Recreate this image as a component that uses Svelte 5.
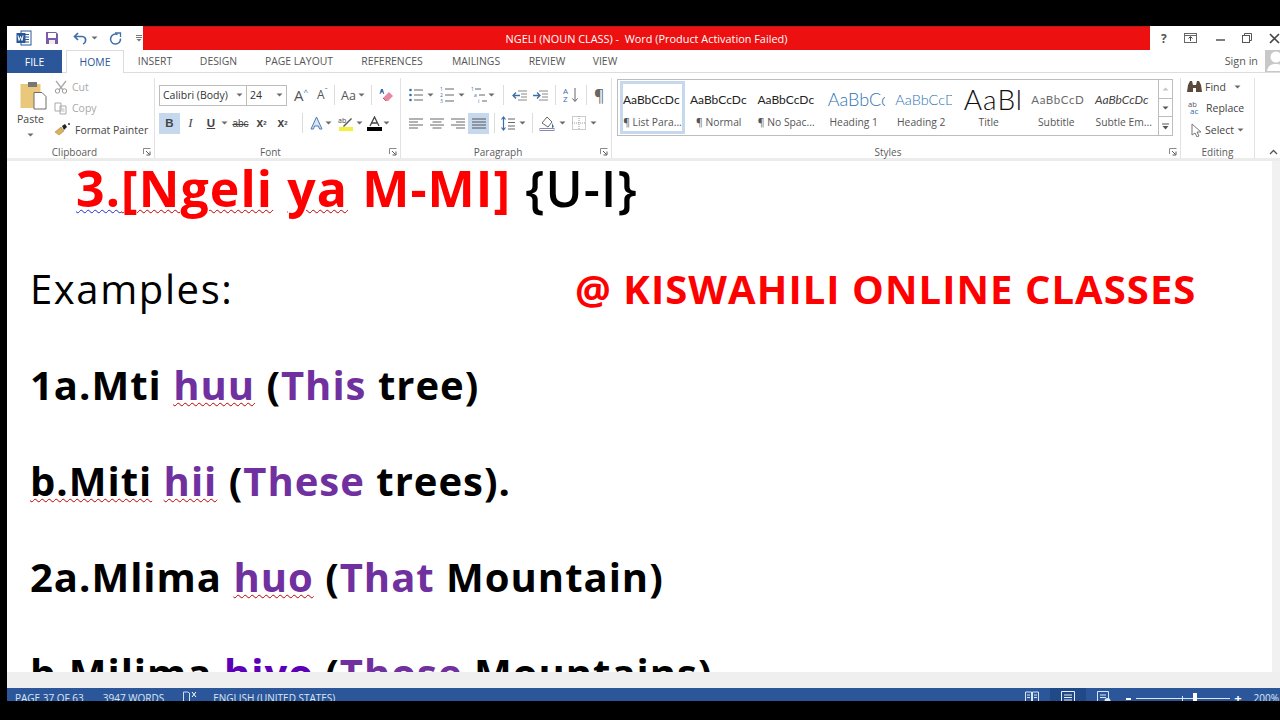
<script>
  const tabs = [
    ['INSERT', 't-insert'], ['DESIGN', 't-design'], ['PAGE LAYOUT', 't-page'],
    ['REFERENCES', 't-ref'], ['MAILINGS', 't-mail'], ['REVIEW', 't-review'], ['VIEW', 't-view']
  ];
  const styles = [
    { s: 'AaBbCcDc', l: '¶ List Para...', c: 'sel' },
    { s: 'AaBbCcDc', l: '¶ Normal', c: '' },
    { s: 'AaBbCcDc', l: '¶ No Spac...', c: '' },
    { s: 'AaBbCc', l: 'Heading 1', c: 'h1' },
    { s: 'AaBbCcD', l: 'Heading 2', c: 'h2' },
    { s: 'AaBl', l: 'Title', c: 'title' },
    { s: 'AaBbCcD', l: 'Subtitle', c: 'sub' },
    { s: 'AaBbCcDc', l: 'Subtle Em...', c: 'em' }
  ];
</script>

{#snippet caret()}
  <svg class="caret" width="7" height="4" viewBox="0 0 7 4"><path d="M0.500 0.500h6L3.500 3.500z" fill="#6a6a6a"/></svg>
{/snippet}

{#snippet launcher()}
  <svg class="launch" width="8" height="8" viewBox="0 0 8 8"><path d="M0.500 6V0.500H7.500" fill="none" stroke="#8a8a8a"/><path d="M3 3l3.500 3.500M7 3.500V7H3.500" fill="none" stroke="#5a5a5a"/></svg>
{/snippet}

<div class="window">
  <div class="titlebar">
    <div class="qat">
      <svg width="16" height="16" viewBox="0 0 16 16"><rect x="5" y="1" width="10" height="14" fill="#fff" stroke="#2b579a"/><path d="M9 4.500h4M9 7h4M9 9.500h4M9 12h4" stroke="#2b579a"/><rect x="0.500" y="3" width="9" height="10" fill="#2b579a"/><path d="M2 5.500l1 5 1.500-4 1.500 4 1-5" fill="none" stroke="#fff"/></svg>
      <svg class="q-save" width="14" height="14" viewBox="0 0 14 14"><path d="M1 1h10l2 2v10H1z" fill="#7d5aa6"/><rect x="3" y="2" width="8" height="5" fill="#fff"/><rect x="4" y="9" width="6" height="4" fill="#eee"/></svg>
      <svg class="q-undo" width="15" height="13" viewBox="0 0 15 13"><path d="M5 1L1.500 4.500 5 8M2 4.500h7a3.500 3.500 0 0 1 3.500 4.500 3.500 3.500 0 0 1-2.500 3" fill="none" stroke="#3f6fa8" stroke-width="1.700"/></svg>
      {@render caret()}
      <svg class="q-redo" width="13" height="13" viewBox="0 0 13 13"><path d="M8.500 2.500A5 5 0 1 0 11.500 6.500" fill="none" stroke="#3f6fa8" stroke-width="1.500"/><path d="M6 1h5.500v4" fill="none" stroke="#3f6fa8" stroke-width="1.300"/></svg>
      <svg class="q-more" width="6" height="8" viewBox="0 0 6 8"><path d="M0 1.500h6M0 3.500h6" stroke="#777"/><path d="M0.500 5h5L3 7.500z" fill="#777"/></svg>
    </div>
    <div class="redbar">NGELI (NOUN CLASS) -&nbsp; Word (Product Activation Failed)</div>
    <div class="winctl">
      <span class="help">?</span>
      <svg width="13" height="10" viewBox="0 0 13 10"><rect x="0.500" y="0.500" width="12" height="9" fill="none" stroke="#666"/><path d="M0.500 2.500h12" stroke="#666"/><path d="M6.500 8V4M4.500 5.500l2-2 2 2" fill="none" stroke="#444"/></svg>
      <svg width="9" height="9" viewBox="0 0 9 9"><path d="M0 6h9" stroke="#555" stroke-width="1.500"/></svg>
      <svg width="10" height="10" viewBox="0 0 10 10"><rect x="0.500" y="2.500" width="7" height="7" fill="#fff" stroke="#555"/><path d="M2.500 2.500v-2h7v7h-2" fill="none" stroke="#555"/></svg>
      <svg width="11" height="11" viewBox="0 0 11 11"><path d="M1 1l9 9M10 1l-9 9" stroke="#444" stroke-width="1.600"/></svg>
    </div>
  </div>

  <div class="tabs">
    <div class="tab-file">FILE</div>
    <div class="tab-home">HOME</div>
    {#each tabs as t}
      <div class="tab {t[1]}">{t[0]}</div>
    {/each}
    <div class="signin">Sign in</div>
    <div class="avatar"><svg width="15" height="21" viewBox="0 0 15 21"><circle cx="11" cy="7" r="5.500" fill="#fff"/><path d="M2 21c1-6 5-7 9-7s4 1 4 1v6z" fill="#fff"/></svg></div>
  </div>

  <div class="ribbon">
    <section class="group g-clip">
      <div class="g-body clip-body">
        <div class="paste">
          <svg width="27" height="29" viewBox="0 0 27 29"><rect x="0.500" y="3" width="20" height="24" fill="#e9c77b"/><rect x="8" y="1" width="9" height="5" fill="#777"/><path d="M14 11.500h8l4 4V28H14z" fill="#fff" stroke="#6d6d6d"/></svg>
          <span class="paste-l">Paste</span>
          {@render caret()}
        </div>
        <div class="clip-list">
          <div class="cl dim"><svg width="14" height="14" viewBox="0 0 14 14"><circle cx="3.500" cy="11" r="2.200" fill="none" stroke="#999"/><circle cx="10.500" cy="11" r="2.200" fill="none" stroke="#999"/><path d="M2 1l7 9M12 1L5 10" stroke="#aaa" stroke-width="1.300"/></svg><span>Cut</span></div>
          <div class="cl dim"><svg width="14" height="14" viewBox="0 0 14 14"><path d="M1 2h6v8H1zM6 5h6v8H6z" fill="#fff" stroke="#aaa"/><path d="M7.500 8h3M7.500 10h3" stroke="#bbb"/></svg><span>Copy</span></div>
          <div class="cl"><svg width="17" height="13" viewBox="0 0 17 13"><path d="M1 9l6-5 3 4-5 4z" fill="#d8b15a" stroke="#9a7a34" stroke-width="0.500"/><path d="M8 3l3-2 2 3-3 3z" fill="#222"/><path d="M14 1h2M15 0v2" stroke="#333"/></svg><span>Format Painter</span></div>
        </div>
      </div>
      <footer class="g-foot">Clipboard{@render launcher()}</footer>
    </section>

    <section class="group g-font">
      <div class="g-body tools">
        <div class="row r1">
          <div class="combo c-font"><span>Calibri (Body)</span>{@render caret()}</div>
          <div class="combo c-size"><span>24</span>{@render caret()}</div>
          <span class="grow ml6">A<sup>^</sup></span>
          <span class="shrink">A<sup>ˇ</sup></span>
          <i class="sep s1"></i>
          <span class="case">Aa</span>{@render caret()}
          <i class="sep"></i>
          <svg class="ml4" width="15" height="16" viewBox="0 0 15 16"><path d="M2 2L0.500 7h1l.4-1.500h2L4.300 7h1L3.800 2z" fill="#3d6da6"/><path d="M4 11l6-6 4 4-5 5H7z" fill="#e58aa2"/><path d="M4 11l3 3" stroke="#c56"/></svg>
        </div>
        <div class="row r2">
          <span class="fmt on b">B</span>
          <span class="fmt i">I</span>
          <span class="fmt u">U</span>{@render caret()}
          <span class="fmt abc">abc</span>
          <span class="fmt x">x<sub>2</sub></span>
          <span class="fmt x">x<sup>2</sup></span>
          <i class="sep s2"></i>
          <svg class="fa" width="15" height="15" viewBox="0 0 15 15"><path d="M7.500 1L2 13h2.500l1-3h4l1 3H13z" fill="#d9e5f3" stroke="#4b7ab5"/></svg>
          <span class="gap1"></span>{@render caret()}
          <svg class="ml3" width="17" height="15" viewBox="0 0 17 15"><rect x="1" y="11" width="14" height="4" fill="#f5f03c"/><path d="M5 10l8-8 1 1-8 8z" fill="#555"/><text x="0" y="7" font-size="7" font-family="Open Sans" fill="#444">ab</text></svg>
          <span class="gap1"></span>{@render caret()}
          <svg class="ml3b" width="15" height="15" viewBox="0 0 15 15"><rect x="0" y="11" width="15" height="4" fill="#000"/><path d="M3 10L7.500 1 12 10M5 7h5" fill="none" stroke="#444" stroke-width="1.300"/></svg>
          <span class="gap1"></span>{@render caret()}
        </div>
      </div>
      <footer class="g-foot">Font{@render launcher()}</footer>
    </section>

    <section class="group g-para">
      <div class="g-body tools">
        <div class="row r1 p1">
          <svg width="14" height="14" viewBox="0 0 14 14"><path d="M5 2h9M5 7h9M5 12h9" stroke="#666"/><circle cx="1.500" cy="2" r="1.300" fill="#3d6da6"/><circle cx="1.500" cy="7" r="1.300" fill="#3d6da6"/><circle cx="1.500" cy="12" r="1.300" fill="#3d6da6"/></svg>
          <span class="gap3"></span>{@render caret()}
          <svg class="ml5" width="14" height="16" viewBox="0 0 14 16"><path d="M5 2h9M5 8h9M5 14h9" stroke="#666"/><text x="0" y="4" font-size="5" fill="#3d6da6" font-family="Open Sans">1</text><text x="0" y="10" font-size="5" fill="#3d6da6" font-family="Open Sans">2</text><text x="0" y="16" font-size="5" fill="#3d6da6" font-family="Open Sans">3</text></svg>
          <span class="gap3"></span>{@render caret()}
          <svg class="ml5" width="16" height="16" viewBox="0 0 16 16"><path d="M4 2h6M8 8h6M11 14h5" stroke="#666"/><text x="0" y="4" font-size="5" fill="#3d6da6" font-family="Open Sans">1</text><text x="3" y="10" font-size="5" fill="#3d6da6" font-family="Open Sans">a</text><text x="7" y="16" font-size="5" fill="#3d6da6" font-family="Open Sans">i</text></svg>
          <span class="gap1"></span>{@render caret()}
          <i class="sep s3"></i>
          <svg width="15" height="11" viewBox="0 0 15 11"><path d="M6 1h9M9 4h6M9 7h6M6 10h9" stroke="#888"/><path d="M8 5.500H1M4 2.500l-3 3 3 3" fill="none" stroke="#3d6da6" stroke-width="1.300"/></svg>
          <svg class="ml5" width="15" height="11" viewBox="0 0 15 11"><path d="M6 1h9M9 4h6M9 7h6M6 10h9" stroke="#888"/><path d="M0 5.500h7M4 2.500l3 3-3 3" fill="none" stroke="#3d6da6" stroke-width="1.300"/></svg>
          <i class="sep s4"></i>
          <svg width="16" height="16" viewBox="0 0 16 16"><text x="0" y="7" font-size="8" font-family="Open Sans" fill="#3d6da6">A</text><text x="0" y="15" font-size="8" font-family="Open Sans" fill="#3d6da6">Z</text><path d="M12 1v13M9.500 11.500l2.500 3 2.500-3" fill="none" stroke="#666"/></svg>
          <i class="sep s4"></i>
          <span class="pil">¶</span>
        </div>
        <div class="row r2 p2">
          <svg width="14" height="11" viewBox="0 0 14 11"><path d="M0 1h14M0 4h9M0 7h14M0 10h9" stroke="#666"/></svg>
          <svg class="ml7" width="14" height="11" viewBox="0 0 14 11"><path d="M0 1h14M2.500 4h9M0 7h14M2.500 10h9" stroke="#666"/></svg>
          <svg class="ml7" width="14" height="11" viewBox="0 0 14 11"><path d="M0 1h14M5 4h9M0 7h14M5 10h9" stroke="#666"/></svg>
          <span class="just on"><svg width="14" height="11" viewBox="0 0 14 11"><path d="M0 1h14M0 4h14M0 7h14M0 10h14" stroke="#555"/></svg></span>
          <i class="sep s5"></i>
          <svg width="14" height="15" viewBox="0 0 14 15"><path d="M2.500 1v13M0.500 3.500l2-2.500 2 2.500M0.500 11.500l2 2.500 2-2.500" fill="none" stroke="#3d6da6" stroke-width="1.200"/><path d="M7 3h7M7 6.500h7M7 10h7M7 13h7" stroke="#666"/></svg>
          <span class="gap3"></span>{@render caret()}
          <i class="sep s6"></i>
          <svg width="17" height="16" viewBox="0 0 17 16"><path d="M3 8l5-6 5 5-4 5z" fill="#fff" stroke="#666"/><path d="M13 8l2 4-2 1z" fill="#3d6da6"/><rect x="1" y="13.500" width="14" height="2" fill="none" stroke="#88a"/></svg>
          <span class="gap2"></span>{@render caret()}
          <svg class="ml5" width="14" height="14" viewBox="0 0 14 14"><path d="M0.500 0.500h13v13h-13zM7 0v14M0 7h14" fill="none" stroke="#999" stroke-dasharray="1 1"/></svg>
          <span class="gap3"></span>{@render caret()}
        </div>
      </div>
      <footer class="g-foot">Paragraph{@render launcher()}</footer>
    </section>

    <section class="group g-styles">
      <div class="g-body">
        <div class="gallery">
          {#each styles as st}
            <div class="style {st.c}">
              <div class="sample">{st.s}</div>
              <div class="slabel">{st.l}</div>
            </div>
          {/each}
          <div class="scroller">
            <div class="sb"><svg width="7" height="4" viewBox="0 0 7 4"><path d="M0.500 3.500h6L3.500 0.500z" fill="#c4c4c4"/></svg></div>
            <div class="sb"><svg width="7" height="4" viewBox="0 0 7 4"><path d="M0.500 0.500h6L3.500 3.500z" fill="#555"/></svg></div>
            <div class="sb"><svg width="7" height="7" viewBox="0 0 7 7"><path d="M0 1h7" stroke="#555"/><path d="M0.500 3h6L3.500 6.500z" fill="#555"/></svg></div>
          </div>
        </div>
      </div>
      <footer class="g-foot">Styles{@render launcher()}</footer>
    </section>

    <section class="group g-edit">
      <div class="g-body edit-body">
        <div class="ed"><svg width="15" height="13" viewBox="0 0 15 13"><path d="M1 5l2-4h2l1 4h3l1-4h2l2 4 1 7H9V8H6v4H0z" fill="#5a4a3a"/></svg><span>Find</span><span class="gap4"></span>{@render caret()}</div>
        <div class="ed"><svg width="16" height="14" viewBox="0 0 16 14"><text x="1" y="6" font-size="7.500" font-family="Open Sans" fill="#555">ab</text><text x="3" y="13" font-size="8" font-family="Open Sans" fill="#2b6cb0">ac</text></svg><span>Replace</span></div>
        <div class="ed sel-ed"><svg width="11" height="14" viewBox="0 0 11 14"><path d="M1 1l9 8H6l2 4-2 1-2-4-3 2z" fill="#fff" stroke="#777"/></svg><span>Select</span>{@render caret()}</div>
      </div>
      <footer class="g-foot nolaunch">Editing</footer>
    </section>

    <div class="collapse"><svg width="9" height="6" viewBox="0 0 9 6"><path d="M1 5l3.500-3.500L8 5" fill="none" stroke="#555" stroke-width="1.300"/></svg></div>
  </div>
  <div class="rule"></div>

  <div class="docwrap">
    <div class="page">
      <p class="l-title"><span class="red"><span class="sq-blue">3.</span><span class="sq">[Ngeli</span> <span class="sq">ya</span> M-MI]</span> <span class="curly">{'{'}U-I{'}'}</span></p>
      <p class="line first"><span class="ex">Examples:</span><span class="brand">@ KISWAHILI ONLINE CLASSES</span></p>
      <p class="line bold">1a.Mti <span class="pur sq">huu</span> (<span class="pur">This</span> tree)</p>
      <p class="line bold"><span class="sq">b.Miti</span> <span class="pur sq">hii</span> (<span class="pur">These</span> trees).</p>
      <p class="line bold">2a.Mlima <span class="pur sq">huo</span> (<span class="pur">That</span> Mountain)</p>
      <p class="line bold">b.Milima <span class="vio sq">hiyo</span> (<span class="pur">Those</span> Mountains)</p>
    </div>
    <div class="gutter"></div>
  </div>
  <div class="hscroll"></div>

  <div class="status">
    <span class="st s-page">PAGE 37 OF 63</span>
    <span class="st s-words">3947 WORDS</span>
    <svg class="s-book" width="14" height="12" viewBox="0 0 14 12"><path d="M0.500 1h4l2 1v10l-2-1h-4zM6.500 2v10" fill="none" stroke="#cfe0f5"/><path d="M9 1l4 5M13 1L9 6" stroke="#fff"/></svg>
    <span class="st s-lang">ENGLISH (UNITED STATES)</span>
    <span class="spacer"></span>
    <svg class="v-read" width="14" height="13" viewBox="0 0 14 13"><path d="M0.500 1h6v12h-6zM7.500 1h6v12h-6z" fill="none" stroke="#d9e6f7"/><path d="M2 4h3M2 6.500h3M9 4h3M9 6.500h3" stroke="#d9e6f7"/></svg>
    <span class="v-print"><svg width="14" height="13" viewBox="0 0 14 13"><path d="M0.500 0.500h13v13h-13z" fill="none" stroke="#e6eef9"/><path d="M3 4h8M3 6.500h8M3 9h8" stroke="#e6eef9"/></svg></span>
    <svg class="v-web" width="14" height="13" viewBox="0 0 14 13"><path d="M0.500 0.500h11v13h-11z" fill="none" stroke="#d9e6f7"/><path d="M3 4h6M3 6.500h6" stroke="#d9e6f7"/><circle cx="10.500" cy="10" r="3" fill="#d9e6f7"/></svg>
    <span class="zminus"></span>
    <span class="slider"><i class="tick"></i><i class="thumb"></i></span>
    <span class="zplus">+</span>
    <span class="st s-zoom">200%</span>
  </div>
</div>

<style>
  :global(body) { margin: 0; background: #000; }
  .window {
    width: 1273px; height: 675px; margin: 26px 0 0 7px; background: #fff; overflow: hidden;
    display: flex; flex-direction: column;
    font-family: "Open Sans", "Noto Sans", sans-serif; color: #444;
  }
  :global(#app) { height: 720px; overflow: hidden; display: block; }
  svg { display: block; flex: none; }

  .titlebar { height: 24px; display: flex; flex: none; }
  .qat { width: 136px; display: flex; align-items: center; padding-left: 9px; box-sizing: border-box; }
  .q-save { margin-left: 13px; }
  .q-undo { margin-left: 14px; }
  .qat .caret { margin-left: 3px; }
  .q-redo { margin-left: 11px; }
  .q-more { margin-left: 14px; }
  .redbar {
    width: 1007px; background: #ec1010; border-top: 1px solid #b81818; box-sizing: border-box; color: #fff; font-size: 10.900px;
    display: flex; align-items: center; justify-content: center; padding-right: 0; white-space: pre;
  }
  .winctl { flex: 1; display: flex; align-items: center; position: relative; }
  .winctl > * { flex: none; }
  .winctl .help { font-weight: 700; font-size: 12px; color: #555; margin-left: 11px; width: 8px; }
  .winctl svg:nth-of-type(1) { margin-left: 15px; }
  .winctl svg:nth-of-type(2) { margin-left: 19px; }
  .winctl svg:nth-of-type(3) { margin-left: 17px; }
  .winctl svg:nth-of-type(4) { margin-left: 17px; }

  .tabs { height: 23px; flex: none; display: flex; align-items: stretch; border-bottom: 1px solid #dcdcdc; box-sizing: border-box; position: relative; font-size: 10.400px; color: #555; }
  .tab-file { width: 55px; background: #2b579a; color: #fff; display: flex; align-items: center; justify-content: center; margin-bottom: -1px; }
  .tab-home { width: 58px; margin-left: 4px; border: 1px solid #dcdcdc; border-bottom: 0; box-sizing: border-box; background: #fff; margin-bottom: -1px; color: #2b579a; display: flex; align-items: center; justify-content: center; }
  .tab { display: flex; align-items: center; justify-content: center; white-space: nowrap; }
  .t-insert { width: 62px; }
  .t-design { width: 65px; }
  .t-page { width: 96px; }
  .t-ref { width: 90px; }
  .t-mail { width: 78px; }
  .t-review { width: 64px; }
  .t-view { width: 52px; }
  .signin { margin-left: auto; display: flex; align-items: center; font-size: 10.800px; padding-bottom: 2px; }
  .avatar { width: 15px; margin-left: 7px; background: #c8c8c8; overflow: hidden; }

  .ribbon { height: 85px; flex: none; display: flex; background: #fff; font-size: 10.500px; }
  .rule { height: 3px; flex: none; background: #ececec; }
  .group { position: relative; display: flex; flex-direction: column; box-sizing: border-box; margin-top: 5px; border-right: 1px solid #e2e2e2; margin-bottom: 0; }
  .g-clip { width: 148px; }
  .g-font { width: 246px; }
  .g-para { width: 211px; }
  .g-styles { width: 569px; }
  .g-edit { width: 74px; }
  .g-body { flex: 1; min-height: 0; }
  .g-foot { height: 13px; flex: none; display: flex; justify-content: center; align-items: center; position: relative; color: #5c5c5c; font-size: 10px; box-sizing: border-box; }
  .g-foot .launch { position: absolute; right: 3px; top: 3px; }
  .g-clip .g-foot { padding-right: 12px; }
  .g-font .g-foot { padding-right: 14px; }
  .g-para .g-foot { padding-right: 16px; }
  .g-styles .g-foot { padding-right: 16px; }

  .clip-body { display: flex; }
  .paste { width: 47px; padding: 3px 0 0 13px; box-sizing: border-box; display: flex; flex-direction: column; }
  .paste-l { font-size: 10.500px; margin: 2px 0 0 -3px; width: 30px; color: #444; }
  .paste .caret { margin: 7px 0 0 7px; }
  .clip-list { display: flex; flex-direction: column; margin-top: -2px; }
  .cl { height: 21.500px; display: flex; align-items: center; gap: 4px; white-space: nowrap; }
  .cl.dim { color: #a8a8a8; }

  .tools { display: flex; flex-direction: column; padding-left: 4px; }
  .row { display: flex; align-items: center; height: 22px; white-space: nowrap; }
  .r1 { margin-top: 6px; }
  .r2 { margin-top: 6px; }
  .combo { height: 21px; border: 1px solid #bdbdbd; box-sizing: border-box; display: flex; align-items: center; background: #fff; padding: 0 3px; justify-content: space-between; color: #333; }
  .c-font { width: 88px; }
  .c-size { width: 41px; margin-left: -1px; }
  .grow, .shrink { font-size: 15px; color: #555; width: 13px; line-height: 1; white-space: nowrap; }
  .shrink { font-size: 12px; margin-left: 10px; }
  .grow sup, .shrink sup { font-size: 8px; color: #3d6da6; line-height: 0; vertical-align: 6px; }
  .sep { width: 1px; height: 20px; background: #dcdcdc; margin: 0 6px; flex: none; display: block; }
  .s1 { margin: 0 6px 0 4px; }
  .s2 { margin: 0 0 0 9px; }
  .s3 { margin: 0 8px 0 8px; }
  .s4 { margin: 0 7px; }
  .s5 { margin: 0 6px 0 5px; }
  .s6 { margin: 0 6px 0 6px; }
  .case { font-size: 12.500px; color: #555; margin-right: 2px; }
  .ml3 { margin-left: 6px; }
  .ml3b { margin-left: 4px; }
  .fa { margin-left: 6px; }
  .ml4 { margin-left: 1px; }
  .ml5 { margin-left: 6px; }
  .ml6 { margin-left: 7px; }
  .ml7 { margin-left: 7px; }
  .gap1 { width: 1px; } .gap2 { width: 3px; } .gap3 { width: 4px; } .gap4 { width: 8px; }
  .fmt { width: 21px; height: 21px; display: flex; align-items: center; justify-content: center; font-size: 11.500px; font-family: "Liberation Sans", sans-serif; color: #444; flex: none; }
  .on { background: #c5d8ee; }
  .b { font-weight: 700; }
  .i { font-style: italic; font-family: "Liberation Serif", serif; font-size: 13px; }
  .u { text-decoration: underline; font-weight: 700; width: 20px; }
  .abc { text-decoration: line-through; font-size: 10px; width: 21px; margin-left: 2px; }
  .x { font-weight: 700; font-size: 12px; }
  .x sub, .x sup { font-size: 6px; line-height: 0; }
  .p1 { padding-left: 4px; }
  .p2 { padding-left: 4px; }
  .pil { font-size: 16px; color: #666; }
  .just { width: 21px; height: 21px; margin-left: 3px; display: flex; align-items: center; justify-content: center; flex: none; }

  .gallery { width: 556px; height: 57px; margin: 1px 0 0 5px; box-sizing: border-box; border: 1px solid #bdbdbd; display: flex; padding: 1px 0 1px 2px; }
  .style { width: 67.500px; box-sizing: border-box; flex: none; overflow: hidden; display: flex; flex-direction: column; align-items: center; }
  .style.sel { border: 3px solid #c5d8ee; width: 65px; }
  .sel .sample { height: 31px; padding-left: 0; }
  .sample { height: 36px; width: 100%; box-sizing: border-box; padding-left: 5px; overflow: hidden; display: flex; align-items: center; justify-content: flex-start; font-family: "Lato", sans-serif; font-size: 12px; color: #222; white-space: nowrap; }
  .slabel { font-size: 10.300px; color: #555; white-space: nowrap; margin-top: -2px; }
  .sel .slabel { margin-top: 0; }
  .h1 .sample { font-size: 18px; color: #2e74b5; font-weight: 300; }
  .h1 .sample, .h2 .sample { max-width: 62px; }
  .h2 .sample { font-size: 14.500px; color: #2e74b5; font-weight: 300; }
  .title .sample { font-size: 28px; font-weight: 300; color: #111; padding-left: 6px; max-width: 62px; letter-spacing: 1px; }
  .sub .sample { font-size: 11.500px; color: #6a6a6a; letter-spacing: 0.600px; padding-left: 6px; max-width: 62px; }
  .em .sample { font-style: italic; color: #444; }
  .scroller { width: 14px; flex: none; margin-left: auto; margin-top: -1px; margin-bottom: -1px; border-left: 1px solid #bdbdbd; display: flex; flex-direction: column; }
  .sb { flex: 1; display: flex; align-items: center; justify-content: center; border-bottom: 1px solid #bdbdbd; }
  .sb:last-child { border-bottom: 0; }

  .edit-body { padding: 0 0 0 6px; margin-top: -2px; display: flex; flex-direction: column; }
  .ed { height: 21.500px; display: flex; align-items: center; gap: 3px; white-space: nowrap; color: #444; }
  .ed .gap4 { width: 2px; }
  .sel-ed { padding-left: 4px; }
  .collapse { flex: 1; position: relative; }
  .collapse svg { position: absolute; right: 2px; bottom: 3px; }

  .docwrap { flex: 1; min-height: 0; display: flex; }
  .page { flex: 1; padding-left: 23px; overflow: hidden; color: #000; font-family: "Open Sans", sans-serif; white-space: nowrap; }
  .gutter { width: 8px; background: #f1f1f1; }
  .hscroll { height: 16px; flex: none; background: #efefef; }
  p { margin: 0; }
  .l-title { font-size: 50px; line-height: 54px; padding-left: 46px; font-weight: 700; letter-spacing: 1.100px; }
  .red { color: #f00; }
  .curly { color: #000; font-weight: 600; }
  .line { font-size: 40px; line-height: 96px; letter-spacing: 1px; }
  .first { margin-top: 26px; display: flex; }
  .ex { width: 545px; flex: none; font-weight: 400; letter-spacing: 1.600px; }
  .brand { font-weight: 700; color: #f00; letter-spacing: 1.050px; }
  .bold { font-weight: 700; }
  .pur { color: #7030a0; }
  .vio { color: #5c00b8; }
  .sq { text-decoration: underline wavy #c00000; text-decoration-thickness: 1px; text-underline-offset: 2px; }
  .sq-blue { text-decoration: underline wavy #1a2fd0; text-decoration-thickness: 1px; text-underline-offset: 2px; }

  .status { height: 13px; flex: none; background: #2b579a; color: #dbe6f5; display: flex; align-items: flex-start; font-size: 10px; overflow: hidden; position: relative; }
  .st { line-height: 20px; white-space: nowrap; }
  .s-page { margin-left: 8px; }
  .s-words { margin-left: 19px; }
  .s-book { margin: 3px 0 0 19px; }
  .s-lang { margin-left: 16px; }
  .spacer { flex: 1; }
  .v-read { margin: 3px 11px 0 0; }
  .v-print { width: 36px; height: 13px; background: #1f4a87; display: flex; justify-content: center; padding-top: 3px; box-sizing: border-box; }
  .v-web { margin: 3px 0 0 11px; }
  .zminus { width: 5px; height: 2px; background: #fff; margin: 10px 0 0 15px; }
  .slider { width: 94px; height: 1px; background: #dbe6f5; margin: 10px 0 0 5px; position: relative; }
  .tick { position: absolute; left: 46px; top: -2px; width: 1px; height: 5px; background: #dbe6f5; }
  .thumb { position: absolute; left: 57px; top: -5px; width: 4px; height: 11px; background: #fff; }
  .zplus { font-size: 13px; font-weight: 700; color: #fff; margin-left: 4px; line-height: 20px; }
  .s-zoom { margin: 0 1px 0 12px; }
</style>
